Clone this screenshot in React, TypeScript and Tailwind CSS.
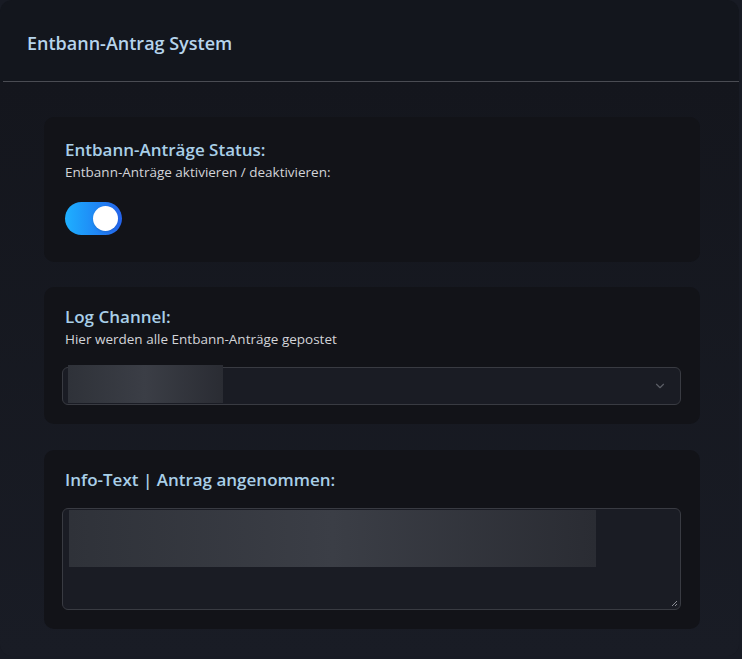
import { ChevronDown } from "lucide-react";

function Section({ title, hint, children, className }: { title: string; hint?: string; children: React.ReactNode; className?: string }) {
  return (
    <div className={"rounded-[10px] bg-[#121318] px-[21px] " + (className ?? "")}>
      <h3 className="text-[17px] font-semibold leading-[22px] text-[#a9cfe8]">{title}</h3>
      {hint && <p className="mt-[2px] text-[13.5px] leading-[18px] text-[#d2d4d8]">{hint}</p>}
      {children}
    </div>
  );
}

function Redacted({ className }: { className: string }) {
  return <div className={"bg-gradient-to-r from-[#2f3239] via-[#3b3e46] to-[#2a2c33] " + className} />;
}

export default function App() {
  return (
    <div className="h-[659px] w-[742px] bg-[#181b24] font-['Open_Sans',sans-serif]">
      <div className="flex h-[656px] w-[739px] flex-col overflow-hidden rounded-[12px] bg-[#13161d]">
        <div className="flex h-[81px] items-center pl-[27px] pt-[6px]">
          <h2 className="text-[18px] font-semibold text-[#b6d4ec]">Entbann-Antrag System</h2>
        </div>
        <div className="ml-[3px] h-px bg-[#4a4c53]" />
        <div className="flex flex-1 flex-col bg-gradient-to-b from-[#14161d] to-[#191c25] pl-[44px] pr-[39px] pt-[35px]">
          <Section title="Entbann-Anträge Status:" hint="Entbann-Anträge aktivieren / deaktivieren:" className="h-[145px] pt-[22px]">
            <button className="mt-[21px] flex h-[33px] w-[57px] items-center justify-end rounded-full bg-gradient-to-r from-[#1fb0ff] to-[#2563eb] pr-[4px]">
              <span className="h-[25px] w-[25px] rounded-full bg-white shadow" />
            </button>
          </Section>
          <Section title="Log Channel:" hint="Hier werden alle Entbann-Anträge gepostet" className="mt-[25px] h-[137px] pt-[19px]">
            <div className="relative mt-[19px] ml-[-3px] mr-[-2px] h-[38px] rounded-[6px] border border-[#393b42] bg-[#1a1c24]">
              <Redacted className="absolute left-[5px] top-[-3px] h-[38px] w-[155px]" />
              <ChevronDown className="absolute right-[13px] top-[11px] h-[14px] w-[14px] text-[#5b5e66]" />
            </div>
          </Section>
          <Section title="Info-Text | Antrag angenommen:" className="mt-[26px] h-[179px] pt-[19px]">
            <div className="relative mt-[17px] ml-[-3px] mr-[-2px] h-[102px] rounded-[6px] border border-[#393b42] bg-[#1a1c24]">
              <Redacted className="absolute left-[6px] top-[1px] h-[57px] w-[527px]" />
              <svg className="absolute bottom-[2px] right-[2px]" width="7" height="7" viewBox="0 0 7 7">
                <path d="M6 1 L1 6 M6 4 L4 6" stroke="#8a8d94" strokeWidth="1" />
              </svg>
            </div>
          </Section>
        </div>
      </div>
    </div>
  );
}
